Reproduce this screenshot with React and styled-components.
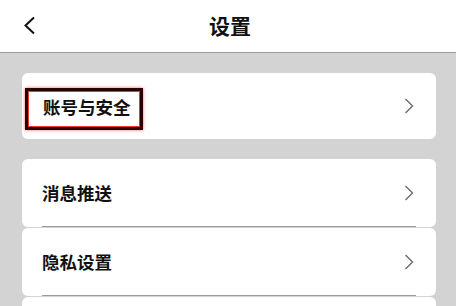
import React from 'react';
import styled, { createGlobalStyle } from 'styled-components';

const GlobalStyle = createGlobalStyle`
  html, body {
    margin: 0;
    padding: 0;
    background: #d3d3d3;
    font-family: "Noto Sans CJK SC", "Noto Sans", sans-serif;
    overflow: hidden;
  }
`

const Page = styled.div`
  width: 456px;
  height: 306px;
  overflow: hidden;
  background: #d3d3d3;
`

const Header = styled.header`
  box-sizing: border-box;
  height: 53px;
  background: #fff;
  border-bottom: 1px solid #9a9a9a;
  display: grid;
  grid-template-columns: 1fr auto 1fr;
  align-items: center;
  padding: 0 0 2px 23px;
`

const BackButton = styled.button`
  justify-self: start;
  border: 0;
  background: none;
  padding: 0;
  display: flex;
  align-items: center;
  cursor: pointer;
`

const Title = styled.h1`
  margin: 0 0 0 -19px;
  font-size: 21px;
  font-weight: 700;
  color: #111;
`

const Content = styled.main`
  padding: 20px 20px 0 22px;
  display: flex;
  flex-direction: column;
  gap: 20px;
`

const Group = styled.div`
  display: flex;
  flex-direction: column;
  gap: 1px;
`

const Card = styled.div`
  height: ${(props) => props.height}px;
  background: #fff;
  border-radius: 6px;
  padding: 0 20px;
`

const Row = styled.div`
  box-sizing: border-box;
  height: 100%;
  display: flex;
  align-items: center;
  justify-content: space-between;
  border-bottom: ${(props) => (props.divider ? '1.5px solid #9c9c9c' : 'none')};
`

const Label = styled.span`
  font-size: 17.5px;
  font-weight: 700;
  color: #111;
  letter-spacing: 0;
`

const Highlight = styled.span`
  box-sizing: border-box;
  display: inline-flex;
  align-items: center;
  height: 42px;
  margin: 6px 0 0 -17px;
  padding: 0 9px 6px 15px;
  border: 3px solid #2a0000;
  box-shadow: inset 0 0 0 1px #e53935, 0 0 3px #ff5a5a;
`

const Arrow = styled.svg`
  margin-right: 2px;
  flex-shrink: 0;
`

function ChevronRight() {
  return (
    <Arrow width="10" height="16" viewBox="0 0 10 16">
      <path d="M1.5 1 L8.5 8 L1.5 15" fill="none" stroke="#666" strokeWidth="1.3" />
    </Arrow>
  )
}

const items = ['消息推送', '隐私设置']

export default function App() {
  return (
    <Page>
      <GlobalStyle />
      <Header>
        <BackButton>
          <svg width="13" height="19" viewBox="0 0 13 19">
            <path d="M11 1.5 L2.5 9.5 L11 17.5" fill="none" stroke="#111" strokeWidth="2" />
          </svg>
        </BackButton>
        <Title>设置</Title>
        <span />
      </Header>
      <Content>
        <Card height={66}>
          <Row>
            <Highlight>
              <Label>账号与安全</Label>
            </Highlight>
            <ChevronRight />
          </Row>
        </Card>
        <Group>
          {items.map((item) => (
            <Card key={item} height={68}>
              <Row divider>
                <Label>{item}</Label>
                <ChevronRight />
              </Row>
            </Card>
          ))}
          <Card height={68} />
        </Group>
      </Content>
    </Page>
  )
}
